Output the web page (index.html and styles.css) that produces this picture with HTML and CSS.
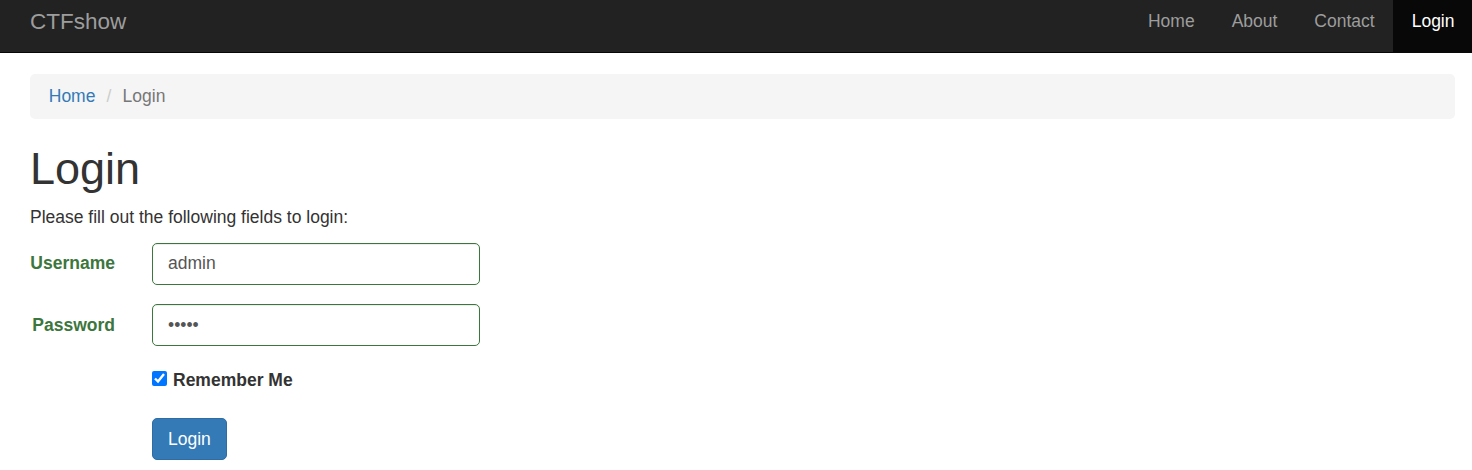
FILE: index.html
```html
<!DOCTYPE html>
<html lang="en">
<head>
<meta charset="utf-8">
<title>Login</title>
<link rel="stylesheet" href="styles.css">
</head>
<body>
<nav class="navbar">
  <a class="brand" href="#">CTFshow</a>
  <ul class="nav">
    <li><a href="#">Home</a></li>
    <li><a href="#">About</a></li>
    <li><a href="#">Contact</a></li>
    <li class="active"><a href="#">Login</a></li>
  </ul>
</nav>
<div class="container">
  <ul class="breadcrumb">
    <li><a href="#">Home</a></li>
    <li class="current">Login</li>
  </ul>
  <h1 class="title">Login</h1>
  <p class="lead-text">Please fill out the following fields to login:</p>
  <form class="login-form">
    <div class="form-group first">
      <label class="control-label" for="username">Username</label>
      <input class="form-control" id="username" type="text" value="admin">
    </div>
    <div class="form-group">
      <label class="control-label" for="password">Password</label>
      <input class="form-control" id="password" type="password" value="admin">
    </div>
    <div class="form-group check-row">
      <label class="checkbox-label"><input class="check" type="checkbox" checked> Remember Me</label>
    </div>
    <div class="form-group button-row">
      <button class="btn-primary" type="button">Login</button>
    </div>
  </form>
</div>
</body>
</html>
```
FILE: styles.css
```css
html, body {
  margin: 0;
  padding: 0;
}
body {
  font-family: "Liberation Sans", Arial, Helvetica, sans-serif;
  font-size: 17.5px;
  line-height: 25px;
  color: #333;
  background: #fff;
}
a {
  text-decoration: none;
}
.navbar {
  display: flex;
  justify-content: space-between;
  align-items: stretch;
  height: 52px;
  background: #222;
  border-bottom: 1px solid #080808;
}
.brand {
  padding: 8.5px 0 0 30px;
  font-size: 22.5px;
  line-height: 25px;
  color: #9d9d9d;
}
.nav {
  display: flex;
  margin: 0;
  padding: 0;
  list-style: none;
}
.nav li {
  display: flex;
}
.nav a {
  display: block;
  padding: 8.5px 18.5px 0 18.5px;
  color: #9d9d9d;
  line-height: 25px;
}
.nav .active a {
  background: #080808;
  color: #fff;
  padding-right: 17.5px;
}
.container {
  padding: 21px 17px 0 30px;
}
.breadcrumb {
  margin: 0 0 25px;
  padding: 10px 18.75px;
  list-style: none;
  background: #f5f5f5;
  border-radius: 5px;
}
.breadcrumb li {
  display: inline-block;
}
.breadcrumb li + li::before {
  content: "/\00a0";
  padding: 0 6.25px;
  color: #ccc;
}
.breadcrumb a {
  color: #337ab7;
}
.breadcrumb .current {
  color: #777;
}
.title {
  margin: 0 0 12.5px;
  font-size: 45px;
  font-weight: 500;
  line-height: 1.1;
}
.lead-text {
  margin: -1px 0 12.5px;
}
.login-form {
  margin: 0;
}
.form-group {
  display: grid;
  grid-template-columns: 85px 328px;
  column-gap: 37px;
  margin-bottom: 18.75px;
}
.form-group.first {
  margin-bottom: 19.75px;
}
.control-label {
  padding-top: 8.75px;
  text-align: right;
  white-space: nowrap;
  font-weight: bold;
  color: #3c763d;
}
.form-control {
  box-sizing: border-box;
  height: 42px;
  width: 100%;
  margin: 0;
  padding: 7.5px 15px;
  font-family: inherit;
  font-size: 17.5px;
  line-height: 25px;
  color: #555;
  background: #fff;
  border: 1px solid #3c763d;
  border-radius: 5px;
  box-shadow: inset 0 1px 1px rgba(0, 0, 0, .075);
  outline: none;
}
.check-row {
  margin-bottom: 25px;
  padding-top: 3px;
}
.checkbox-label {
  grid-column: 2;
  display: flex;
  align-items: flex-start;
  font-weight: bold;
  white-space: nowrap;
}
.check {
  width: 15px;
  height: 15px;
  margin: 3px 6px 0 0;
}
.button-row .btn-primary {
  grid-column: 2;
  justify-self: start;
}
.btn-primary {
  padding: 7.5px 15px;
  font-family: inherit;
  font-size: 17.5px;
  line-height: 25px;
  color: #fff;
  background: #337ab7;
  border: 1px solid #2e6da4;
  border-radius: 5px;
}
```
